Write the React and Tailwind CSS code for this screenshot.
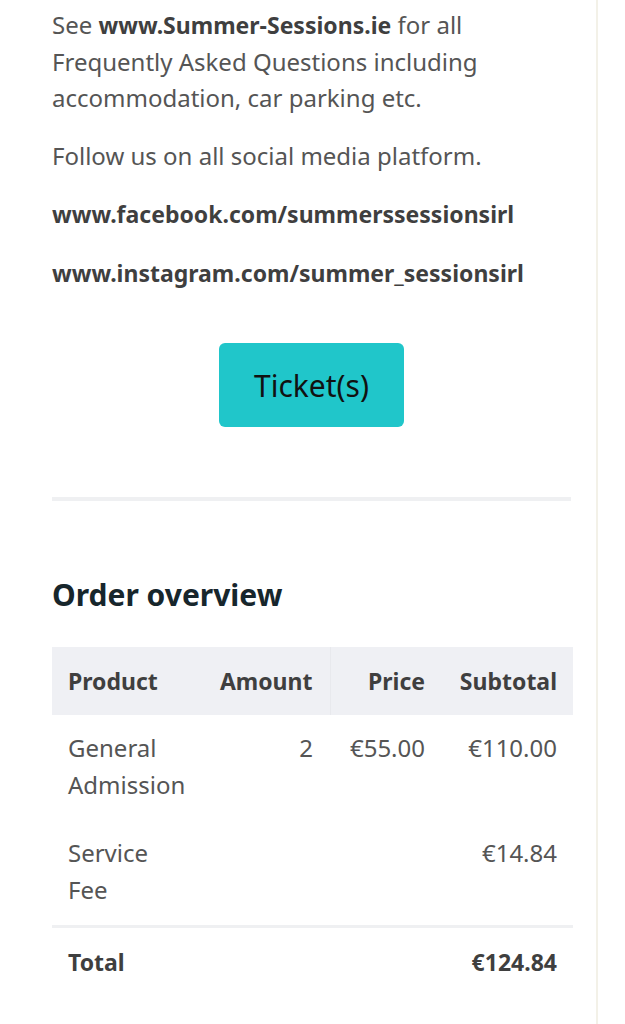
const rows = [
  { product: ['General', 'Admission'], amount: '2', price: '€55.00', subtotal: '€110.00' },
  { product: ['Service', 'Fee'], amount: '', price: '', subtotal: '€14.84' },
]

export default function App() {
  return (
    <div className="min-h-screen bg-white flex" style={{ fontFamily: '"Noto Sans", sans-serif' }}>
      <div className="w-[598px] border-r-2 border-[#f3f1e8] pl-[52px] pr-[25px]">
        <div className="text-[24px] leading-[36.5px] text-[#555555]">
          <p className="pt-[7px]">
            See <b className="text-[23px] font-bold text-[#3f3f3f]">www.Summer-Sessions.ie</b> for all Frequently Asked Questions including accommodation, car parking etc.
          </p>
          <p className="mt-[21px]">Follow us on all social media platform.</p>
          <p className="mt-[22px] text-[23px] font-bold text-[#3f3f3f]">www.facebook.com/summerssessionsirl</p>
          <p className="mt-[22px] text-[23px] font-bold text-[#3f3f3f]">www.instagram.com/summer_sessionsirl</p>
        </div>

        <div className="flex justify-center mt-[52px]">
          <button className="w-[185px] h-[84px] rounded-md bg-[#20c6ca] text-[30px] text-[#111] font-normal">
            Ticket(s)
          </button>
        </div>

        <div className="mt-[70px] h-[4px] bg-[#eff0f2]" />

        <h2 className="mt-[76px] text-[30px] leading-[36px] font-bold text-[#17262c]">Order overview</h2>

        <table className="mt-[34px] w-full table-fixed border-collapse text-[24px] text-[#555555]">
          <colgroup>
            <col className="w-[153px]" />
            <col className="w-[125px]" />
            <col className="w-[111px]" />
            <col className="w-[132px]" />
          </colgroup>
          <thead>
            <tr className="bg-[#eff0f4] text-[23px] text-[#3f3f3f] font-bold h-[68px]">
              <th className="text-left pl-4 font-bold">Product</th>
              <th className="text-right pr-[17px] font-bold border-r border-[#e8e9ed]">Amount</th>
              <th className="text-right pr-4 font-bold">Price</th>
              <th className="text-right pr-4 font-bold">Subtotal</th>
            </tr>
          </thead>
          <tbody>
            {rows.map((r, i) => (
              <tr key={i} className="align-top leading-[37px]">
                <td className="pl-4 pt-[14px] pb-[17px] whitespace-nowrap">
                  {r.product[0]}
                  <br />
                  {r.product[1]}
                </td>
                <td className="text-right pr-[17px] pt-[14px]">{r.amount}</td>
                <td className="text-right pr-4 pt-[14px] whitespace-nowrap">{r.price}</td>
                <td className="text-right pr-4 pt-[14px] whitespace-nowrap">{r.subtotal}</td>
              </tr>
            ))}
            <tr className="border-t-[3px] border-[#eff0f2] text-[23px] text-[#3f3f3f] font-bold leading-[37px]">
              <td className="pl-4 pt-[16px]">Total</td>
              <td />
              <td />
              <td className="text-right pr-4 pt-[16px]">€124.84</td>
            </tr>
          </tbody>
        </table>
      </div>
    </div>
  )
}
